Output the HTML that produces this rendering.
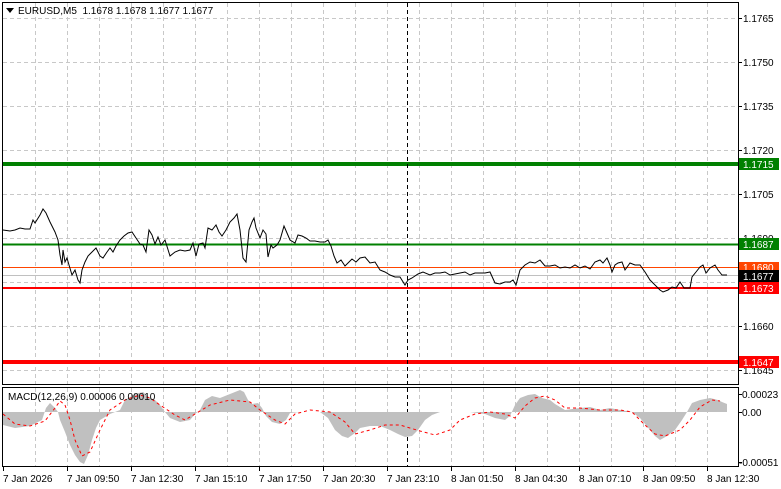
<!DOCTYPE html>
<html><head><meta charset="utf-8"><style>
html,body{margin:0;padding:0;background:#fff;}
svg{display:block;font-family:"Liberation Sans",sans-serif;}
</style></head><body>
<svg width="781" height="489" viewBox="0 0 781 489" xmlns="http://www.w3.org/2000/svg">
<rect width="781" height="489" fill="#fff"/>
<g stroke="#c8c8c8" stroke-width="1" stroke-dasharray="4,3" shape-rendering="crispEdges">
<path d="M3 18.5H738M3 62.5H738M3 106.5H738M3 150.5H738M3 194.5H738M3 238.5H738M3 282.5H738M3 326.5H738M3 370.5H738"/>
<path d="M35.5 3V384M67.5 3V384M99.5 3V384M131.5 3V384M163.5 3V384M195.5 3V384M227.5 3V384M259.5 3V384M291.5 3V384M323.5 3V384M355.5 3V384M387.5 3V384M419.5 3V384M451.5 3V384M483.5 3V384M515.5 3V384M547.5 3V384M579.5 3V384M611.5 3V384M643.5 3V384M675.5 3V384M707.5 3V384"/>
<path d="M35.5 388V466M67.5 388V466M99.5 388V466M131.5 388V466M163.5 388V466M195.5 388V466M227.5 388V466M259.5 388V466M291.5 388V466M323.5 388V466M355.5 388V466M387.5 388V466M419.5 388V466M451.5 388V466M483.5 388V466M515.5 388V466M547.5 388V466M579.5 388V466M611.5 388V466M643.5 388V466M675.5 388V466M707.5 388V466"/>
</g>
<line x1="3" y1="164" x2="738" y2="164" stroke="#008000" stroke-width="4"/>
<line x1="3" y1="244.5" x2="738" y2="244.5" stroke="#008000" stroke-width="2"/>
<line x1="3" y1="267.5" x2="738" y2="267.5" stroke="#ff4500" stroke-width="1"/>
<line x1="3" y1="275.5" x2="738" y2="275.5" stroke="#c0c0c0" stroke-width="1"/>
<line x1="3" y1="288" x2="738" y2="288" stroke="#ff0000" stroke-width="2"/>
<line x1="3" y1="362" x2="738" y2="362" stroke="#ff0000" stroke-width="4"/>
<line x1="407.5" y1="3" x2="407.5" y2="466" stroke="#000" stroke-dasharray="4,3"/>
<polyline fill="none" stroke="#000" stroke-width="1" points="3,230 10,231 15,230 20,228 25,229 30,229 33,220 35,223 40,215 43,209 46,213 50,222 55,232 58,240 60,255 62,265 63,250 65,262 67,258 69,265 72,275 75,270 78,280 80,283 82,270 85,262 88,256 92,252 96,248 100,256 103,258 107,252 110,248 113,252 116,246 120,240 124,236 128,233 132,232 136,238 140,244 143,245 146,252 149,230 152,235 155,244 158,237 161,245 165,240 170,256 175,252 180,250 185,251 190,250 193,243 196,256 199,244 203,243 205,248 208,228 212,230 216,225 219,232 222,236 226,230 230,222 234,218 237,214 240,230 243,258 246,262 249,230 252,222 254,218 256,228 260,238 263,230 266,234 268,257 271,245 273,248 277,245 280,240 284,226 287,233 290,240 295,243 298,235 302,236 306,238 310,241 315,241 320,242 325,242 328,240 331,246 334,256 337,263 341,260 345,266 349,262 352,259 356,262 360,258 365,257 370,263 375,262 380,270 385,272 390,275 395,277 400,277 405,285 408,280 412,278 418,274 423,272 430,275 435,273 440,273 445,272 450,275 455,274 460,273 465,272 470,275 475,273 480,273 485,273 490,272 495,283 500,284 505,282 510,282 513,280 516,285 520,270 525,265 530,262 535,263 540,260 545,266 550,266 555,265 560,268 565,267 570,268 575,265 580,268 585,266 590,269 595,262 600,260 603,263 607,258 610,265 612,272 615,265 618,263 622,262 625,270 630,263 635,265 640,265 645,272 650,280 655,285 660,290 663,292 668,290 672,287 676,288 680,282 684,288 690,288 692,277 696,272 700,267 703,265 706,273 710,268 715,265 718,270 722,275 727,275"/>
<polygon fill="#c0c0c0" points="3,412 3,425 15,428 30,426 42,420 46,408 50,403 55,408 58,412 60,420 65,432 70,445 75,455 80,462 84,464 88,455 92,440 96,428 100,420 110,414 120,410 125,400 135,394 143,392 150,398 155,400 160,405 165,412 170,418 180,422 190,420 195,414 200,410 205,400 212,396 220,398 230,394 240,390 244,392 248,400 252,404 258,403 262,408 266,416 272,422 280,424 286,420 290,413 300,412 320,412 328,418 335,430 342,436 348,438 355,433 360,428 370,426 380,426 390,430 398,434 405,437 412,436 418,430 425,420 432,415 440,412 470,412 485,414 495,418 505,420 510,416 515,405 520,398 528,395 535,394 542,398 550,400 555,404 565,410 580,408 590,407 600,410 610,408 620,410 632,412 640,418 650,430 655,436 660,440 667,436 675,430 682,420 687,412 692,403 700,400 710,398 718,400 722,402 727,404 727,412"/>
<polyline fill="none" stroke="#ff0000" stroke-width="1" stroke-dasharray="3,3" points="3,414 15,424 30,426 45,421 55,408 60,401 65,405 70,420 75,440 82,456 90,452 100,430 110,410 125,400 140,395 150,398 160,405 175,415 185,420 195,414 210,405 230,400 250,402 260,410 275,420 285,424 295,414 310,410 330,412 345,422 355,434 370,430 385,425 400,425 420,431 435,435 450,430 460,420 475,414 490,412 505,414 515,418 525,406 535,398 545,396 555,400 565,408 580,408 600,410 620,410 632,412 645,425 655,434 665,436 680,430 690,420 700,407 712,400 720,401"/>
<g fill="none" stroke="#000" stroke-width="1" shape-rendering="crispEdges">
<rect x="2.5" y="2.5" width="736" height="382"/>
<rect x="2.5" y="387.5" width="736" height="79"/>
</g>
<g stroke="#000" shape-rendering="crispEdges">
<path d="M738 18.5h4M738 62.5h4M738 106.5h4M738 150.5h4M738 194.5h4M738 238.5h4M738 326.5h4M738 370.5h4M738 394.5h4M738 412.5h4M738 462.5h4"/>
<path d="M3.5 467v4M67.5 467v4M131.5 467v4M195.5 467v4M259.5 467v4M323.5 467v4M387.5 467v4M451.5 467v4M515.5 467v4M579.5 467v4M643.5 467v4M707.5 467v4"/>
</g>
<path d="M6 8h8l-4 5z" fill="#000"/>
<text x="18" y="14" font-size="10" fill="#000" xml:space="preserve">EURUSD,M5  1.1678 1.1678 1.1677 1.1677</text>
<text x="8" y="400" font-size="10" fill="#000">MACD(12,26,9) 0.00006 0.00010</text>
<g font-size="10" fill="#000">
<text x="743" y="22">1.1765</text>
<text x="743" y="66">1.1750</text>
<text x="743" y="110">1.1735</text>
<text x="743" y="154">1.1720</text>
<text x="743" y="198">1.1705</text>
<text x="743" y="242">1.1690</text>
<text x="743" y="330">1.1660</text>
<text x="743" y="374">1.1645</text>
<text x="742" y="398">0.00023</text>
<text x="742" y="416">0.00</text>
<text x="739" y="466">-0.00051</text>
</g>
<g font-size="10" fill="#fff">
<rect x="739" y="158" width="40" height="12" fill="#008000"/><text x="743" y="168">1.1715</text>
<rect x="739" y="238" width="40" height="12" fill="#008000"/><text x="743" y="248">1.1687</text>
<rect x="739" y="262" width="40" height="11" fill="#ff4500"/><text x="743" y="271">1.1680</text>
<rect x="739" y="270" width="40" height="12" fill="#000"/><text x="743" y="280">1.1677</text>
<rect x="739" y="282" width="40" height="12" fill="#ff0000"/><text x="743" y="292">1.1673</text>
<rect x="739" y="356" width="40" height="12" fill="#ff0000"/><text x="743" y="366">1.1647</text>
</g>
<g font-size="10" fill="#000">
<text x="3" y="482">7 Jan 2026</text>
<text x="67" y="482">7 Jan 09:50</text>
<text x="131" y="482">7 Jan 12:30</text>
<text x="195" y="482">7 Jan 15:10</text>
<text x="259" y="482">7 Jan 17:50</text>
<text x="323" y="482">7 Jan 20:30</text>
<text x="387" y="482">7 Jan 23:10</text>
<text x="451" y="482">8 Jan 01:50</text>
<text x="515" y="482">8 Jan 04:30</text>
<text x="579" y="482">8 Jan 07:10</text>
<text x="643" y="482">8 Jan 09:50</text>
<text x="707" y="482">8 Jan 12:30</text>
</g>
</svg>
</body></html>
